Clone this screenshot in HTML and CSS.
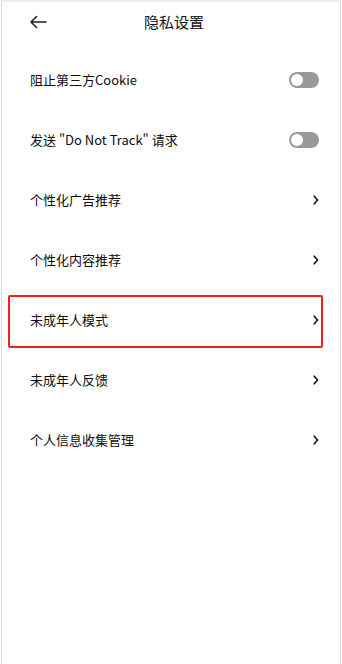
FILE: index.html
```html
<!DOCTYPE html>
<html lang="zh-CN">
<head>
    <meta charset="UTF-8">
    <meta name="viewport" content="width=device-width, initial-scale=1.0">
    <title>隐私设置</title>
    <link rel="stylesheet" href="styles.css">
</head>
<body>
    <div class="page">
        <div class="header">
            <span class="back">
                <svg width="18" height="14" viewBox="0 0 18 14">
                    <path d="M17 7H2M7.5 1.5L2 7l5.5 5.5" fill="none" stroke="#222" stroke-width="1.6" stroke-linecap="round" stroke-linejoin="round"/>
                </svg>
            </span>
            <div class="title">隐私设置</div>
        </div>

        <div class="list">
            <div class="row">
                <span class="label">阻止第三方Cookie</span>
                <span class="toggle"></span>
            </div>
            <div class="row">
                <span class="label">发送 "Do Not Track" 请求</span>
                <span class="toggle"></span>
            </div>
            <div class="row">
                <span class="label">个性化广告推荐</span>
                <svg class="chevron" width="6" height="10" viewBox="0 0 6 10"><path d="M1.2 1.2L4.6 5 1.2 8.8" fill="none" stroke="#111" stroke-width="1.6" stroke-linecap="round" stroke-linejoin="round"/></svg>
            </div>
            <div class="row">
                <span class="label">个性化内容推荐</span>
                <svg class="chevron" width="6" height="10" viewBox="0 0 6 10"><path d="M1.2 1.2L4.6 5 1.2 8.8" fill="none" stroke="#111" stroke-width="1.6" stroke-linecap="round" stroke-linejoin="round"/></svg>
            </div>
            <div class="row marked">
                <span class="label">未成年人模式</span>
                <svg class="chevron" width="6" height="10" viewBox="0 0 6 10"><path d="M1.2 1.2L4.6 5 1.2 8.8" fill="none" stroke="#111" stroke-width="1.6" stroke-linecap="round" stroke-linejoin="round"/></svg>
            </div>
            <div class="row">
                <span class="label">未成年人反馈</span>
                <svg class="chevron" width="6" height="10" viewBox="0 0 6 10"><path d="M1.2 1.2L4.6 5 1.2 8.8" fill="none" stroke="#111" stroke-width="1.6" stroke-linecap="round" stroke-linejoin="round"/></svg>
            </div>
            <div class="row">
                <span class="label">个人信息收集管理</span>
                <svg class="chevron" width="6" height="10" viewBox="0 0 6 10"><path d="M1.2 1.2L4.6 5 1.2 8.8" fill="none" stroke="#111" stroke-width="1.6" stroke-linecap="round" stroke-linejoin="round"/></svg>
            </div>
        </div>
    </div>
</body>
</html>
```

FILE: styles.css
```css
body {
    margin: 0;
    padding: 0;
    background-color: #ffffff;
    font-family: "Noto Sans CJK SC", "Noto Sans", sans-serif;
    color: #111;
}

.page {
    margin-left: 1px;
    width: 340px;
    height: 664px;
    box-sizing: border-box;
    border-left: 1px solid #d6d6d6;
    border-right: 1px solid #d6d6d6;
    border-top: 2px solid #ececec;
    background-color: #ffffff;
}

.header {
    height: 40px;
    display: flex;
    align-items: center;
    position: relative;
    padding-left: 27px;
}

.back {
    display: flex;
    align-items: center;
}

.title {
    position: absolute;
    left: 0;
    right: 0;
    padding-left: 6px;
    text-align: center;
    font-size: 15px;
    line-height: 20px;
    pointer-events: none;
}

.list {
    margin-top: 8px;
}

.row {
    position: relative;
    height: 60px;
    display: flex;
    align-items: center;
    justify-content: space-between;
    padding: 0 21px 0 28px;
}

.label {
    font-size: 13px;
    line-height: 18px;
    color: #0d0d0d;
}

.toggle {
    position: relative;
    width: 30px;
    height: 16px;
    border-radius: 8px;
    background-color: #9a9a9a;
}

.toggle::after {
    content: "";
    position: absolute;
    left: 2px;
    top: 2px;
    width: 12px;
    height: 12px;
    border-radius: 50%;
    background-color: #ffffff;
}

.chevron {
    display: block;
}

.marked::after {
    content: "";
    position: absolute;
    left: 6px;
    right: 17px;
    top: 5px;
    bottom: 2px;
    border: 2px solid #f51d1d;
    border-radius: 2px;
}
```
